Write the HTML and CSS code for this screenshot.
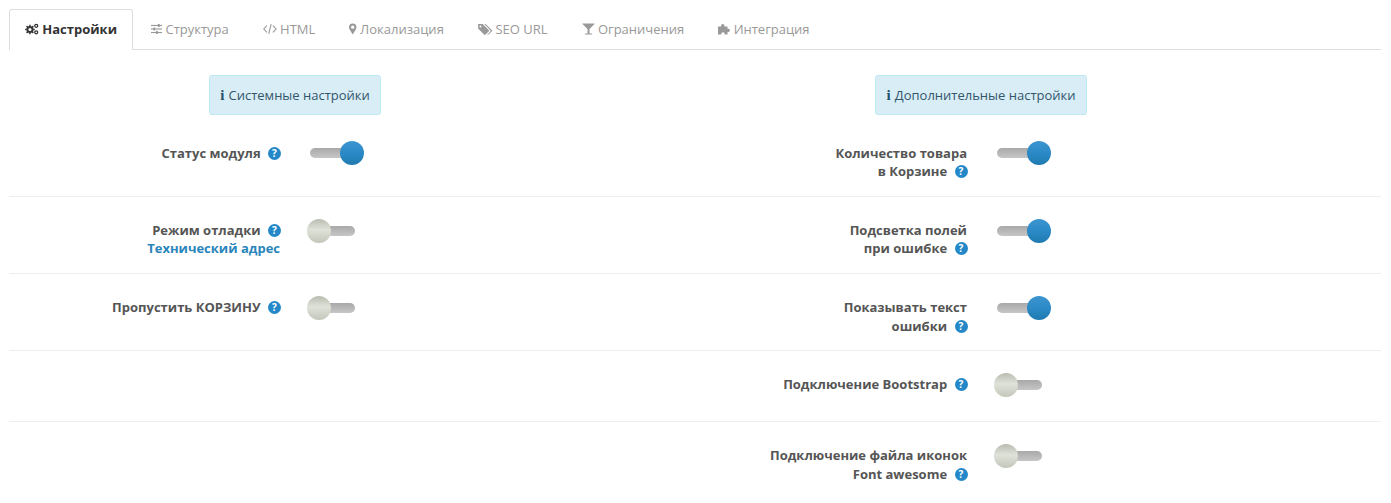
FILE: index.html
```html
<!DOCTYPE html>
<html lang="ru">
<head>
<meta charset="utf-8">
<title>Настройки</title>
<link rel="stylesheet" href="styles.css">
</head>
<body>
<div class="page">
  <ul class="tabs">
    <li class="tab active">
      <svg class="ico w14" viewBox="0 0 14 12"><g fill="none" stroke="currentColor"><circle cx="5" cy="6.5" r="2.6" stroke-width="2"/><path d="M5 1.600v1.600M5 9.800v1.600M.2 6.500h1.600M8.200 6.500h1.600M1.600 3.100l1.100 1.100M7.300 8.800l1.100 1.100M1.600 9.900l1.100-1.100M7.300 4.200l1.100-1.100" stroke-width="1.500"/><circle cx="11.300" cy="2.800" r="1.500" stroke-width="1.300"/><circle cx="11.300" cy="9.300" r="1.500" stroke-width="1.300"/></g></svg>
      Настройки
    </li>
    <li class="tab">
      <svg class="ico w11" viewBox="0 0 12 12"><g fill="currentColor"><rect y="1.600" width="12" height="1.200"/><rect y="5.400" width="12" height="1.200"/><rect y="9.200" width="12" height="1.200"/><rect x="7.400" y="0.600" width="2" height="3.200"/><rect x="2.600" y="4.400" width="2" height="3.200"/><rect x="5.400" y="8.200" width="2" height="3.200"/></g></svg>
      Структура
    </li>
    <li class="tab">
      <svg class="ico w14" viewBox="0 0 14 12"><path d="M4 2.500L.8 6 4 9.500M10 2.500L13.200 6 10 9.500M8.200 1.200L5.800 10.800" fill="none" stroke="currentColor" stroke-width="1.100"/></svg>
      HTML
    </li>
    <li class="tab">
      <svg class="ico w7" viewBox="0 0 8 12"><path fill="currentColor" fill-rule="evenodd" d="M4 0a4 4 0 0 1 4 4c0 1.200-.4 1.900-1 3L4 12 1 7C.4 5.900 0 5.200 0 4a4 4 0 0 1 4-4zm0 2.200a1.800 1.800 0 1 0 0 3.600 1.800 1.800 0 0 0 0-3.600z"/></svg>
      Локализация
    </li>
    <li class="tab">
      <svg class="ico w15" viewBox="0 0 14 12"><g fill="currentColor"><path fill-rule="evenodd" d="M0 1h4.600l6 6a1 1 0 0 1 0 1.400l-3.200 3.200a1 1 0 0 1-1.400 0L0 5.600zM2.400 2.400a1 1 0 1 0 0 2 1 1 0 0 0 0-2z"/><path d="M6.200 1H7.600l6 6a1 1 0 0 1 0 1.400l-3.200 3.200c-.4.4-.8.400-1.200.1l3-3.100a1 1 0 0 0 0-1.400z"/></g></svg>
      SEO URL
    </li>
    <li class="tab">
      <svg class="ico w13" viewBox="0 0 12 12"><path fill="currentColor" d="M0 .5h12v.6L7 6v4.600h2.600v1H2.400v-1H5V6L0 1.100z"/></svg>
      Ограничения
    </li>
    <li class="tab">
      <svg class="ico w12" viewBox="0 0 12 12"><path fill="currentColor" d="M0 3.500h3.200a1.700 1.700 0 1 1 3.100 0h3.200v2.400a1.600 1.600 0 1 1 0 2.800v2.800H6.600a1.700 1.700 0 1 0-3.200 0H0z"/></svg>
      Интеграция
    </li>
  </ul>

  <div class="heads">
    <div class="head"><div class="alert"><span class="info">i</span> Системные настройки</div></div>
    <div class="head"><div class="alert"><span class="info">i</span> Дополнительные настройки</div></div>
  </div>

  <div class="row first">
    <div class="cell">
      <div class="label">Статус модуля <span class="help">?</span></div>
      <div class="switch on"><span class="track"></span><span class="knob"></span></div>
    </div>
    <div class="cell right">
      <div class="label">Количество товара<br>в Корзине <span class="help">?</span></div>
      <div class="switch on"><span class="track"></span><span class="knob"></span></div>
    </div>
  </div>

  <div class="row second">
    <div class="cell">
      <div class="label">Режим отладки <span class="help">?</span><br><a class="tech" href="#">Технический адрес</a></div>
      <div class="switch"><span class="track"></span><span class="knob"></span></div>
    </div>
    <div class="cell right">
      <div class="label">Подсветка полей<br>при ошибке <span class="help">?</span></div>
      <div class="switch on"><span class="track"></span><span class="knob"></span></div>
    </div>
  </div>

  <div class="row">
    <div class="cell">
      <div class="label">Пропустить КОРЗИНУ <span class="help">?</span></div>
      <div class="switch"><span class="track"></span><span class="knob"></span></div>
    </div>
    <div class="cell right">
      <div class="label">Показывать текст<br>ошибки <span class="help">?</span></div>
      <div class="switch on"><span class="track"></span><span class="knob"></span></div>
    </div>
  </div>

  <div class="row short">
    <div class="cell"></div>
    <div class="cell right">
      <div class="label">Подключение Bootstrap <span class="help">?</span></div>
      <div class="switch"><span class="track"></span><span class="knob"></span></div>
    </div>
  </div>

  <div class="row last">
    <div class="cell"></div>
    <div class="cell right">
      <div class="label">Подключение файла иконок<br>Font awesome <span class="help">?</span></div>
      <div class="switch"><span class="track"></span><span class="knob"></span></div>
    </div>
  </div>
</div>
</body>
</html>
```
FILE: styles.css
```css
* { box-sizing: border-box; }
html, body { margin: 0; padding: 0; background: #fff; overflow: hidden; }
body { font-family: "Open Sans", sans-serif; font-size: 13px; color: #555; }
.page { padding: 9px 10px 0 9px; height: 503px; overflow: hidden; }

.tabs {
  display: flex;
  list-style: none;
  margin: 0;
  padding: 0;
  height: 41px;
  border-bottom: 1px solid #ddd;
}
.tab {
  height: 41px;
  padding: 10px 15px 0;
  margin-right: 2px;
  border: 1px solid transparent;
  border-bottom: 0;
  line-height: 18px;
  color: #999;
  white-space: nowrap;
}
.tab.active {
  background: #fff;
  border-color: #ddd;
  border-radius: 3px 3px 0 0;
  color: #333;
  font-weight: 700;
}
.ico { display: inline-block; height: 12px; vertical-align: -1px; }
.w15 { width: 14.2px; }
.w14 { width: 13.9px; }
.w13 { width: 13px; }
.w12 { width: 12.07px; }
.w11 { width: 11.14px; }
.w7 { width: 7.43px; }

.heads { display: grid; grid-template-columns: 687px 1fr; padding-top: 25px; }
.head { display: flex; justify-content: center; padding-right: 115px; }
.alert {
  height: 40px;
  padding: 0 10px;
  line-height: 38px;
  background: #d9edf7;
  border: 1px solid #bce8f1;
  border-radius: 3px;
  color: #33566b;
  white-space: nowrap;
}
.info {
  font-family: "Liberation Serif", serif;
  font-weight: 700;
  font-size: 15px;
  color: #245269;
  margin-right: 0.8px;
}

.row {
  display: grid;
  grid-template-columns: 687px 1fr;
  height: 77px;
  padding-top: 25px;
  border-bottom: 1px solid #eee;
}
.row.first { height: 82px; padding-top: 29px; }
.row.short { height: 71px; }
.row.last { border-bottom: 0; }

.cell { display: flex; align-items: flex-start; }
.label {
  width: 272px;
  margin-top: -1px;
  text-align: right;
  font-weight: 700;
  line-height: 18.57px;
  color: #555;
}
.first .label { margin-top: -0.4px; }
.second .label { margin-top: -1.4px; }
.right .label { width: 271px; }
.right .help { margin-right: -0.5px; }
.right .switch { margin-left: 30px; }
.tech { color: #2a85bb; text-decoration: none; margin-right: 1px; }
.help {
  display: inline-block;
  width: 13px;
  height: 13px;
  margin: -3px 0 -3px 4px;
  border-radius: 50%;
  background: #2488c8;
  color: #fff;
  font-size: 10px;
  line-height: 13px;
  text-align: center;
  vertical-align: 1px;
}

.switch { position: relative; width: 45px; height: 24px; margin-left: 29px; margin-top: -1px; }
.track {
  display: block;
  position: absolute;
  left: 0;
  top: 5px;
  width: 45px;
  height: 10px;
  border-radius: 5px;
  background: linear-gradient(#a9a9a9, #c6c6c6);
}
.knob {
  position: absolute;
  left: -3px;
  top: -2px;
  width: 24px;
  height: 24px;
  border-radius: 50%;
  background: linear-gradient(#b9bcb0, #dfe2d8 45%, #c3c7ba);
}
.switch.on .track { width: 36px; }
.switch.on .knob {
  left: 30px;
  background: linear-gradient(#3d95cf, #2b8ac6 50%, #1f7ab0);
}
```
